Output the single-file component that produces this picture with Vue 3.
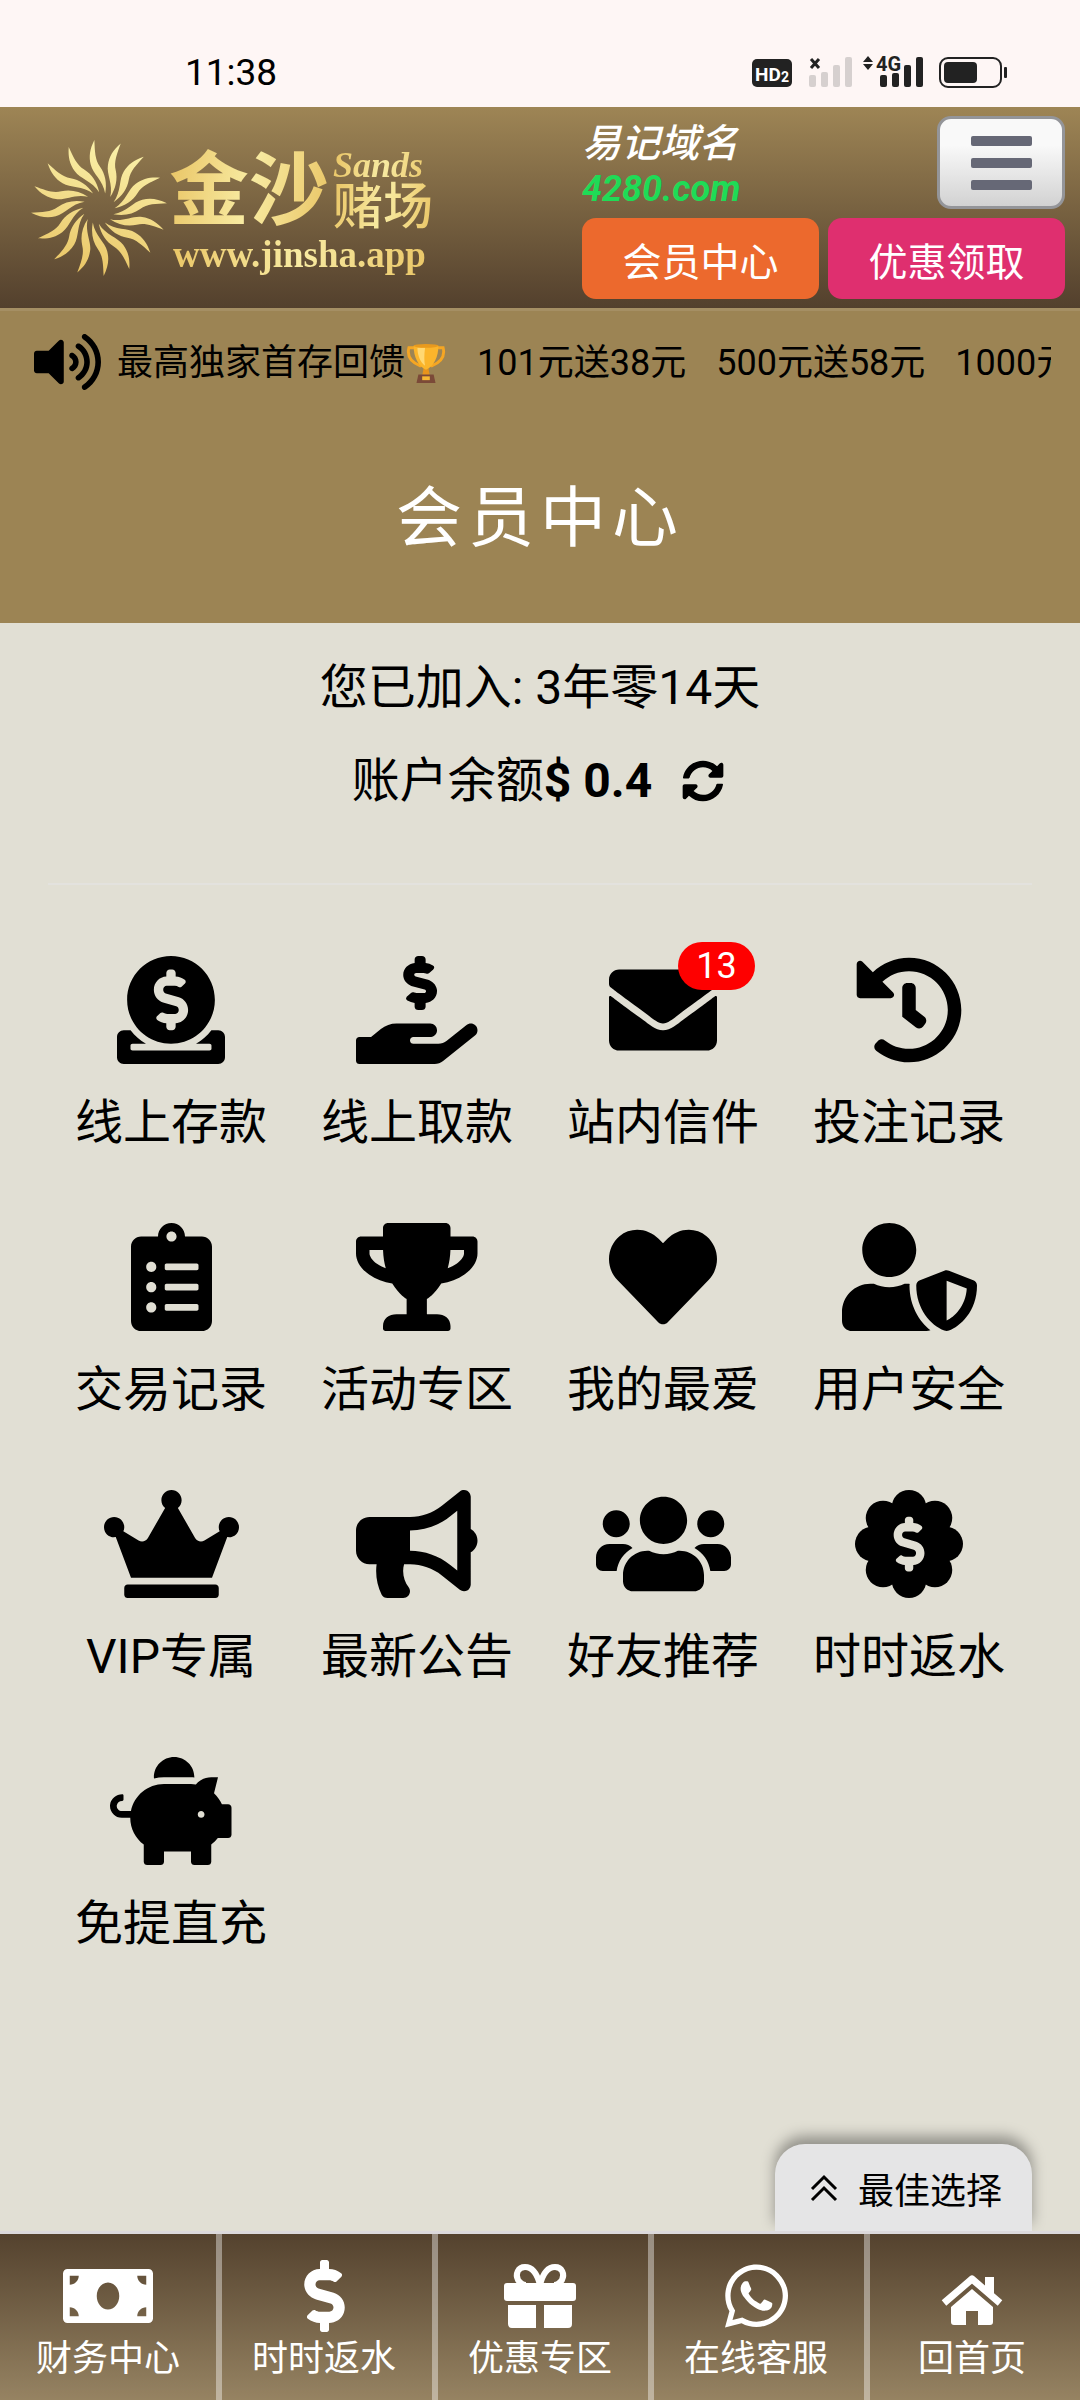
<script setup>
const dollar = 'M233.8 97.4V80.6c0-9.2 7.4-16.6 16.6-16.6h11.1c9.2 0 16.6 7.4 16.6 16.6v17c15.5.8 30.5 6.1 43 15.4 5.6 4.1 6.2 12.3 1.2 17.1L306 145.6c-3.8 3.7-9.5 3.8-14 1-5.4-3.4-11.4-5.1-17.8-5.1h-38.9c-9 0-16.3 8.2-16.3 18.3 0 8.2 5 15.5 12.1 17.6l62.3 18.7c25.7 7.7 43.7 32.4 43.7 60.1 0 34-26.4 61.5-59.1 62.4v16.8c0 9.2-7.4 16.6-16.6 16.6h-11.1c-9.2 0-16.6-7.4-16.6-16.6v-17c-15.5-.8-30.5-6.1-43-15.4-5.6-4.1-6.2-12.3-1.2-17.1l16.3-15.5c3.8-3.7 9.5-3.8 14-1 5.4 3.4 11.4 5.1 17.8 5.1h38.9c9 0 16.3-8.2 16.3-18.3 0-8.2-5-15.5-12.1-17.6l-62.3-18.7c-25.7-7.7-43.7-32.4-43.7-60.1.1-34 26.4-61.5 59.1-62.4z'

const items = [
  { label: '线上存款', w: 512, d: 'M256 416c114.9 0 208-93.1 208-208S370.9 0 256 0 48 93.1 48 208s93.1 208 208 208z' + dollar + 'M480 352h-32.5c-19.6 26-44.6 47.7-73 64h63.8c5.3 0 9.6 3.6 9.6 8v16c0 4.4-4.3 8-9.6 8H73.6c-5.3 0-9.6-3.6-9.6-8v-16c0-4.4 4.3-8 9.6-8h63.8c-28.4-16.3-53.3-38-73-64H32c-17.7 0-32 14.3-32 32v96c0 17.7 14.3 32 32 32h448c17.7 0 32-14.3 32-32v-96c0-17.7-14.3-32-32-32z' },
  { label: '线上取款', w: 576, d: 'M271.06 144.3l54.27 14.3a8.59 8.59 0 0 1 6.63 8.1c0 4.6-4.09 8.4-9.12 8.4h-35.6a30 30 0 0 1-11.19-2.2c-5.24-2.2-11.28-1.7-15.3 2l-19 17.5a11.68 11.68 0 0 0-2.25 2.66 11.42 11.42 0 0 0 3.88 15.74 83.77 83.77 0 0 0 34.51 11.5V240c0 8.8 7.83 16 17.37 16h17.37c9.55 0 17.38-7.2 17.38-16V222.4c32.93-3.6 57.84-31 53.5-63-3.15-23-22.46-41.3-46.56-47.7L282.68 97.4a8.59 8.59 0 0 1-6.63-8.1c0-4.6 4.09-8.4 9.12-8.4h35.6A30 30 0 0 1 332 83.1c5.23 2.2 11.28 1.7 15.3-2l19-17.5A11.31 11.31 0 0 0 368.47 61a11.43 11.43 0 0 0-3.84-15.78 83.82 83.82 0 0 0-34.52-11.5V16c0-8.8-7.82-16-17.37-16H295.37C285.82 0 278 7.2 278 16V33.6c-32.89 3.6-57.85 31-53.51 63C227.63 119.6 247 137.9 271.06 144.3zM565.3 328.1c-11.8-10.7-30.2-10-42.6 0L430.3 402c-11.3 9.1-25.4 14-40 14H272c-8.8 0-16-7.2-16-16s7.2-16 16-16h78.3c15.9 0 30.7-10.9 33.3-26.6 3.3-20-12.1-37.4-31.6-37.4H192c-27 0-53.1 9.3-74.1 26.3L71.4 384H16c-8.8 0-16 7.2-16 16v96c0 8.8 7.2 16 16 16h356.8c14.5 0 28.6-4.9 40-14L564 377c15.2-12.1 16.4-35.3 1.3-48.9z' },
  { label: '站内信件', w: 512, badge: 13, d: 'M502.3 190.8c3.9-3.1 9.7-.2 9.7 4.7V400c0 26.5-21.5 48-48 48H48c-26.5 0-48-21.5-48-48V195.6c0-5 5.7-7.8 9.7-4.7 22.4 17.4 52.1 39.5 154.1 113.6 21.1 15.4 56.7 47.8 92.2 47.6 35.7.3 72-32.8 92.3-47.6 102-74.1 131.6-96.3 154-113.7zM256 320c23.2.4 56.6-29.2 73.4-41.4 132.7-96.3 142.8-104.7 173.4-128.7 5.8-4.5 9.2-11.5 9.2-18.9v-19c0-26.5-21.5-48-48-48H48c-26.5 0-48 21.5-48 48v19c0 7.4 3.4 14.3 9.2 18.9 30.6 23.9 40.7 32.4 173.4 128.7 16.8 12.2 50.2 41.8 73.4 41.4z' },
  { label: '投注记录', w: 512, d: 'M504 255.531c.253 136.64-111.18 248.372-247.82 248.468-59.015.042-113.223-20.53-155.822-54.911-11.077-8.94-11.905-25.541-1.839-35.607l11.267-11.267c8.609-8.609 22.353-9.551 31.891-1.984C173.062 425.135 212.781 440 256 440c101.705 0 184-82.311 184-184 0-101.705-82.311-184-184-184-48.814 0-93.149 18.969-126.068 49.932l50.754 50.754c10.08 10.08 2.941 27.314-11.313 27.314H24c-8.837 0-16-7.163-16-16V38.627c0-14.254 17.234-21.393 27.314-11.314l49.372 49.372C129.209 34.136 189.552 8 256 8c136.81 0 247.747 110.78 248 247.531zm-180.912 78.784l9.823-12.63c8.138-10.463 6.253-25.542-4.21-33.679L288 256.349V152c0-13.255-10.745-24-24-24h-16c-13.255 0-24 10.745-24 24v135.651l65.409 50.874c10.463 8.137 25.541 6.253 33.679-4.21z' },
  { label: '交易记录', w: 384, d: 'M336 64h-80c0-35.3-28.7-64-64-64s-64 28.7-64 64H48C21.5 64 0 85.5 0 112v352c0 26.5 21.5 48 48 48h288c26.5 0 48-21.5 48-48V112c0-26.5-21.5-48-48-48zM96 424c-13.3 0-24-10.7-24-24s10.7-24 24-24 24 10.7 24 24-10.7 24-24 24zm0-96c-13.3 0-24-10.7-24-24s10.7-24 24-24 24 10.7 24 24-10.7 24-24 24zm0-96c-13.3 0-24-10.7-24-24s10.7-24 24-24 24 10.7 24 24-10.7 24-24 24zm96-192c13.3 0 24 10.7 24 24s-10.7 24-24 24-24-10.7-24-24 10.7-24 24-24zm128 368c0 4.4-3.6 8-8 8H168c-4.4 0-8-3.6-8-8v-16c0-4.4 3.6-8 8-8h144c4.4 0 8 3.6 8 8v16zm0-96c0 4.4-3.6 8-8 8H168c-4.4 0-8-3.6-8-8v-16c0-4.4 3.6-8 8-8h144c4.4 0 8 3.6 8 8v16zm0-96c0 4.4-3.6 8-8 8H168c-4.4 0-8-3.6-8-8v-16c0-4.4 3.6-8 8-8h144c4.4 0 8 3.6 8 8v16z' },
  { label: '活动专区', w: 576, d: 'M552 64H448V24c0-13.3-10.7-24-24-24H152c-13.3 0-24 10.7-24 24v40H24C10.7 64 0 74.7 0 88v56c0 35.7 22.5 72.4 61.9 100.7 31.5 22.7 69.8 37.1 110 41.7C203.3 338.5 240 360 240 360v72h-48c-35.3 0-64 20.7-64 56v12c0 6.6 5.4 12 12 12h296c6.6 0 12-5.4 12-12v-12c0-35.3-28.7-56-64-56h-48v-72s36.7-21.5 68.1-73.6c40.3-4.6 78.6-19 110-41.7 39.3-28.3 61.9-65 61.9-100.7V88c0-13.3-10.7-24-24-24zM99.3 192.8C74.9 175.2 64 155.6 64 144v-16h64.2c1 32.6 5.8 61.2 12.8 86.2-15.1-5.2-29.2-12.4-41.7-21.4zM512 144c0 16.1-17.7 36.1-35.3 48.8-12.5 9-26.7 16.2-41.8 21.4 7-25 11.8-53.6 12.8-86.2H512v16z' },
  { label: '我的最爱', w: 512, d: 'M462.3 62.6C407.5 15.9 326 24.3 275.7 76.2L256 96.5l-19.7-20.3C186.1 24.3 104.5 15.9 49.7 62.6c-62.8 53.6-66.1 149.8-9.9 207.9l193.5 199.8c12.5 12.9 32.8 12.9 45.3 0l193.5-199.8c56.3-58.1 53-154.3-9.8-207.9z' },
  { label: '用户安全', w: 640, d: 'M622.3 271.1l-115.2-45c-4.1-1.6-12.6-3.7-22.2 0l-115.2 45c-10.7 4.2-17.7 14-17.7 24.9 0 111.6 68.7 188.8 132.9 213.9 9.6 3.7 18 1.6 22.2 0C558.4 489.9 640 420.5 640 296c0-10.9-7-20.7-17.7-24.9zM496 462.4V273.3l95.5 37.3c-5.6 87.1-60.9 135.4-95.5 151.8zM224 256c70.7 0 128-57.3 128-128S294.7 0 224 0 96 57.3 96 128s57.3 128 128 128zm96 40c0-2.5.8-4.8 1.1-7.2-2.5-.1-4.9-.8-7.5-.8h-16.7c-22.2 10.2-46.9 16-72.9 16s-50.6-5.8-72.9-16h-16.7C60.2 288 0 348.2 0 422.4V464c0 26.5 21.5 48 48 48h352c6.8 0 13.3-1.5 19.2-4-54-42.9-99.2-116.7-99.2-212z' },
  { label: 'VIP专属', w: 640, d: 'M528 448H112c-8.8 0-16 7.2-16 16v32c0 8.8 7.2 16 16 16h416c8.8 0 16-7.2 16-16v-32c0-8.8-7.2-16-16-16zm64-320c-26.5 0-48 21.5-48 48 0 7.1 1.6 13.7 4.4 19.8L476 239.2c-15.4 9.2-35.3 4-44.2-11.6L350.3 85C361 76.2 368 63 368 48c0-26.5-21.5-48-48-48s-48 21.5-48 48c0 15 7 28.2 17.7 37l-81.5 142.6c-8.9 15.6-28.9 20.8-44.2 11.6l-72.3-43.4c2.7-6 4.4-12.7 4.4-19.8 0-26.5-21.5-48-48-48S0 149.5 0 176s21.5 48 48 48c2.6 0 5.2-.4 7.7-.8L128 416h384l72.3-192.8c2.5.4 5.1.8 7.7.8 26.5 0 48-21.5 48-48s-21.5-48-48-48z' },
  { label: '最新公告', w: 576, d: 'M576 240c0-23.63-12.95-44.04-32-55.12V32.01C544 23.26 537.02 0 512 0c-7.12 0-14.19 2.38-19.98 7.02l-85.03 68.03C364.28 109.19 310.66 128 256 128H64c-35.35 0-64 28.65-64 64v96c0 35.35 28.65 64 64 64h33.7c-1.39 10.48-2.18 21.14-2.18 32 0 39.77 9.26 77.35 25.56 110.94 5.19 10.69 16.52 17.06 28.4 17.06h74.28c26.05 0 41.69-29.84 25.9-50.56-16.4-21.52-26.15-48.36-26.15-77.44 0-11.11 1.62-21.79 4.41-32H256c54.66 0 108.28 18.81 150.98 52.95l85.03 68.03a32.023 32.023 0 0 0 19.98 7.02c24.92 0 32-22.78 32-32V295.13C563.05 284.04 576 263.63 576 240zm-96 141.42l-33.05-26.44C392.95 311.78 325.12 288 256 288v-96c69.12 0 136.95-23.78 190.95-66.98L480 98.58v282.84z' },
  { label: '好友推荐', w: 640, d: 'M96 224c35.3 0 64-28.7 64-64s-28.7-64-64-64-64 28.7-64 64 28.7 64 64 64zm448 0c35.3 0 64-28.7 64-64s-28.7-64-64-64-64 28.7-64 64 28.7 64 64 64zm32 32h-64c-17.6 0-33.5 7.1-45.1 18.6 40.3 22.1 68.9 62 75.1 109.4h66c17.7 0 32-14.3 32-32v-32c0-35.3-28.7-64-64-64zm-256 0c61.9 0 112-50.1 112-112S381.9 32 320 32 208 82.1 208 144s50.1 112 112 112zm76.8 32h-8.3c-20.8 10-43.9 16-68.5 16s-47.6-6-68.5-16h-8.3C179.6 288 128 339.6 128 403.2V432c0 26.5 21.5 48 48 48h288c26.5 0 48-21.5 48-48v-28.8c0-63.6-51.6-115.2-115.2-115.2zm-223.7-13.4C161.5 263.1 145.6 256 128 256H64c-35.3 0-64 28.7-64 64v32c0 17.7 14.3 32 32 32h65.9c6.3-47.4 34.9-87.3 75.2-109.4z' },
  { label: '时时返水', w: 512, flower: true },
  { label: '免提直充', w: 576, d: 'M560 224h-29.5c-8.8-20-21.6-37.7-37.4-52.5L512 96h-32c-29.4 0-55.4 13.5-73 34.3-7.6-1.1-15.1-2.3-23-2.3H256c-77.4 0-141.9 55-156.8 128H56c-14.8 0-26.5-13.5-23.5-28.8C34.7 215.8 45.4 208 57 208h1c3.3 0 6-2.7 6-6v-20c0-3.3-2.7-6-6-6-28.5 0-53.9 20.4-57.5 48.6C-3.9 258.8 22.7 288 56 288h40c0 52.2 25.4 98.1 64 127.3V496c0 8.8 7.2 16 16 16h64c8.8 0 16-7.2 16-16v-48h128v48c0 8.8 7.2 16 16 16h64c8.8 0 16-7.2 16-16v-80.7c11.8-8.9 22.3-19.4 31.3-31.3H560c8.8 0 16-7.2 16-16V240c0-8.8-7.2-16-16-16zm-128 64c-8.8 0-16-7.2-16-16s7.2-16 16-16 16 7.2 16 16-7.2 16-16 16zM256 96h128c5.4 0 10.7.4 15.9.8 0-.3.1-.5.1-.8 0-53-43-96-96-96s-96 43-96 96c0 2.1.5 4.1.6 6.2 15.2-3.9 31-6.2 47.4-6.2z' },
]
const rays = Array.from({ length: 16 }, (_, i) => i * 22.5)
const petals = Array.from({ length: 8 }, (_, i) => i * 45)
</script>

<template>
  <div class="page">
    <div class="status">
      <span class="time">11:38</span>
      <svg class="status-icons" width="256" height="34" viewBox="0 0 256 34" aria-hidden="true">
        <rect x="0" y="4" width="40" height="28" rx="5" fill="#222" />
        <text x="3" y="26" class="svg-text" font-size="19" fill="#fff">HD</text>
        <text x="29" y="27" class="svg-text" font-size="14" fill="#fff">2</text>
        <path d="M59 4l8 9M67 4l-8 9" stroke="#222" stroke-width="3" />
        <g fill="#d6d0cf">
          <rect x="57" y="20" width="7" height="12" rx="2" /><rect x="69" y="17" width="7" height="15" rx="2" />
          <rect x="81" y="10" width="7" height="22" rx="2" /><rect x="93" y="2" width="7" height="30" rx="2" />
        </g>
        <g fill="#222">
          <path d="M111 7l5-6 5 6zM111 9l5 6 5-6z" />
          <text x="124" y="16" class="svg-text" font-size="20">4G</text>
          <rect x="128" y="20" width="7" height="12" rx="2" /><rect x="140" y="18" width="7" height="14" rx="2" />
          <rect x="152" y="10" width="7" height="22" rx="2" /><rect x="164" y="2" width="7" height="30" rx="2" />
          <rect x="192" y="7" width="33" height="21" rx="4" /><rect x="252" y="12" width="3" height="11" rx="1" />
        </g>
        <rect x="188" y="3" width="61" height="29" rx="8" fill="none" stroke="#222" stroke-width="2" />
      </svg>
    </div>

    <header class="header">
      <a class="logo" href="#">
        <svg class="sun" viewBox="-67 -67 134 134" aria-hidden="true">
          <defs>
            <linearGradient id="gold" gradientUnits="userSpaceOnUse" x1="10" y1="-60" x2="-20" y2="66">
              <stop offset="0" stop-color="#faf0a8" /><stop offset="1" stop-color="#e9c464" />
            </linearGradient>
            <path id="ray" d="M-4.5-66C-9-57-10-50-8-42C-6-33 4-27 6-14C8-24 6-33 1-40C-4-47-4-55-4.500-66Z" />
          </defs>
          <mask id="sunmask" maskUnits="userSpaceOnUse" x="-67" y="-67" width="134" height="134">
            <use v-for="r in rays" :key="r" href="#ray" :transform="`rotate(${r})`" fill="#fff" />
          </mask>
          <rect x="-67" y="-67" width="134" height="134" fill="url(#gold)" mask="url(#sunmask)" />
        </svg>
        <span class="wordmark">
          <span class="brand">
            <span class="brand-main gold">金沙</span>
            <span class="brand-side">
              <span class="sands gold">Sands</span>
              <span class="casino gold">赌场</span>
            </span>
          </span>
          <span class="url gold">www.jinsha.app</span>
        </span>
      </a>
      <div class="tools">
        <div class="tools-top">
          <div class="domain"><span>易记域名</span><b>4280.com</b></div>
          <button class="menu" type="button" aria-label="菜单"><i></i><i></i><i></i></button>
        </div>
        <div class="tools-buttons">
          <button class="pill orange" type="button">会员中心</button>
          <button class="pill pink" type="button">优惠领取</button>
        </div>
      </div>
    </header>

    <section class="banner">
      <div class="news">
        <svg class="speaker" viewBox="0 0 576 512" aria-hidden="true"><path d="M215.03 71.05L126.06 160H24c-13.26 0-24 10.74-24 24v144c0 13.25 10.74 24 24 24h102.06l88.97 88.95c15.03 15.03 40.97 4.47 40.97-16.97V88.02c0-21.46-25.96-31.98-40.97-16.97zm233.32-51.08c-11.17-7.33-26.18-4.24-33.51 6.95-7.34 11.17-4.22 26.18 6.95 33.51 66.27 43.49 105.82 116.6 105.82 195.58 0 78.98-39.55 152.09-105.82 195.58-11.17 7.32-14.29 22.34-6.95 33.5 7.04 10.71 21.93 14.56 33.51 6.95C528.27 439.58 576 351.33 576 256S528.27 72.43 448.35 19.97zM480 256c0-63.53-32.06-121.94-85.77-156.24-11.19-7.14-26.03-3.82-33.12 7.46s-3.78 26.21 7.41 33.36C408.27 165.97 432 209.11 432 256s-23.73 90.02-63.48 115.42c-11.19 7.14-14.5 22.07-7.41 33.36 6.51 10.36 21.12 15.14 33.12 7.46C447.94 377.94 480 319.53 480 256zm-141.77-76.87c-11.58-6.33-26.19-2.16-32.61 9.45-6.39 11.61-2.16 26.2 9.45 32.61C327.98 228.28 336 241.63 336 256c0 14.38-8.02 27.72-20.92 34.81-11.61 6.41-15.84 21-9.45 32.61 6.43 11.66 21.05 15.8 32.61 9.45 28.23-15.55 45.77-45 45.77-76.88s-17.54-61.32-45.78-76.86z" /></svg>
        <div class="ticker">
          <span class="ticker-item">最高独家首存回馈<svg class="cup" viewBox="0 0 42 42" aria-hidden="true">
            <path d="M8 5H3c-2 8 2 15 12 19M34 5h5c2 8-2 15-12 19" fill="none" stroke="#f5a623" stroke-width="3" stroke-linecap="round" />
            <path d="M19 24h4l2 10h-8z" fill="#e8941c" />
            <path d="M8 3h26c0 12-5 22-13 25C13 25 8 15 8 3z" fill="#fbb52b" />
            <path d="M12 5h8c-1 8-1 14 0 19-5-4-8-11-8-19z" fill="#ffd873" />
            <ellipse cx="21" cy="3" rx="13" ry="2" fill="#e89a1e" />
            <path d="M13 33h16l2 9H11z" fill="#7b4a38" /><rect x="17" y="35" width="8" height="4" fill="#f7b733" />
          </svg></span>
          <span class="ticker-item">101元送38元</span>
          <span class="ticker-item">500元送58元</span>
          <span class="ticker-item">1000元送88元</span>
        </div>
      </div>
      <h1>会员中心</h1>
    </section>

    <main>
      <div class="account">
        <p>您已加入: 3年零14天</p>
        <p>账户余额<b>$ 0.4</b>
          <button class="refresh" type="button" aria-label="刷新余额">
            <svg viewBox="0 0 512 512" aria-hidden="true"><path d="M370.72 133.28C339.458 104.008 298.888 87.962 255.848 88c-77.458.068-144.328 53.178-162.791 126.85-1.344 5.363-6.122 9.15-11.651 9.15H24.103c-7.498 0-13.194-6.807-11.807-14.176C33.933 94.924 134.813 8 256 8c66.448 0 126.791 26.136 171.315 68.685L463.03 40.97C478.149 25.851 504 36.559 504 57.941V192c0 13.255-10.745 24-24 24H345.941c-21.382 0-32.09-25.851-16.971-40.971l41.75-41.749zM32 296h134.059c21.382 0 32.09 25.851 16.971 40.971l-41.75 41.75c31.262 29.273 71.835 45.319 114.876 45.28 77.418-.07 144.315-53.144 162.787-126.849 1.344-5.363 6.122-9.15 11.651-9.15h57.304c7.498 0 13.194 6.807 11.807 14.176C478.067 417.076 377.187 504 256 504c-66.448 0-126.791-26.136-171.315-68.685L48.97 471.03C33.851 486.149 8 475.441 8 454.059V320c0-13.255 10.745-24 24-24z" /></svg>
          </button>
        </p>
      </div>
      <div class="grid">
        <a v-for="item in items" :key="item.label" class="cell" href="#">
          <span class="icon">
            <svg height="108" :viewBox="`0 0 ${item.w} 512`" aria-hidden="true">
              <template v-if="item.flower">
                <circle cx="256" cy="256" r="180" />
                <circle v-for="p in petals" :key="p" cx="256" cy="82" r="82" :transform="`rotate(${p} 256 256)`" />
                <path :d="dollar" fill="#e1dfd4" transform="translate(26 69) scale(.9)" />
              </template>
              <path v-else :d="item.d" fill-rule="evenodd" />
            </svg>
            <span v-if="item.badge" class="badge">{{ item.badge }}</span>
          </span>
          <span class="label">{{ item.label }}</span>
        </a>
      </div>
    </main>

    <div class="best-row">
      <button class="best" type="button">
        <svg width="28" height="28" viewBox="0 0 28 28" fill="none" stroke="#000" stroke-width="3" aria-hidden="true"><path d="M2 15L14 3l12 12M2 26l12-12 12 12" /></svg>
        最佳选择
      </button>
    </div>

    <nav class="nav">
      <a href="#"><span class="nav-icon"><svg width="90" height="72" viewBox="0 0 640 512"><path d="M608 64H32C14.33 64 0 78.33 0 96v320c0 17.67 14.33 32 32 32h576c17.67 0 32-14.33 32-32V96c0-17.67-14.33-32-32-32zM48 400v-64c35.35 0 64 28.65 64 64H48zm0-224v-64h64c0 35.35-28.65 64-64 64zm272 176c-44.19 0-80-42.98-80-96 0-53.03 35.82-96 80-96s80 42.98 80 96c0 53.04-35.82 96-80 96zm272 48h-64c0-35.35 28.65-64 64-64v64zm0-224c-35.35 0-64-28.65-64-64h64v64z" /></svg></span>财务中心</a>
      <a href="#"><span class="nav-icon"><svg width="41" height="72" viewBox="0 0 288 512"><path d="M209.2 233.4l-108-31.6C88.7 198.2 80 186.5 80 173.5c0-16.3 13.2-29.5 29.5-29.5h66.3c12.2 0 24.2 3.7 34.2 10.5 6.1 4.1 14.3 3.1 19.5-2l34.8-34c7.1-6.9 6.1-18.4-1.8-24.5C238 74.8 207.4 64.1 176 64V16c0-8.8-7.2-16-16-16h-32c-8.8 0-16 7.2-16 16v48h-2.5C45.8 64-5.4 118.7.5 183.6c4.2 46.1 39.4 83.6 83.8 96.6l102.5 30c12.5 3.7 21.2 15.3 21.2 28.3 0 16.3-13.2 29.5-29.5 29.5h-66.3C100 368 88 364.3 78 357.5c-6.1-4.1-14.3-3.1-19.5 2l-34.8 34c-7.1 6.9-6.1 18.4 1.8 24.5 24.5 19.2 55.1 29.9 86.5 30v48c0 8.8 7.2 16 16 16h32c8.8 0 16-7.2 16-16v-48.2c46.6-.9 90.3-28.6 105.7-72.7 21.5-61.6-14.6-124.8-72.5-141.7z" /></svg></span>时时返水</a>
      <a href="#"><span class="nav-icon"><svg width="72" height="72" viewBox="0 0 72 72">
        <path d="M36 25C33 13 28 7 21 7c-7 0-10 7-7 13 2 3 5 5 8 5M36 25C39 13 44 7 51 7c7 0 10 7 7 13-2 3-5 5-8 5" fill="none" stroke="#fff" stroke-width="6" />
        <rect x="0" y="23" width="72" height="18" rx="3" /><path d="M4 45h28v23H8a4 4 0 0 1-4-4zM40 45h28v19a4 4 0 0 1-4 4H40z" />
      </svg></span>优惠专区</a>
      <a href="#"><span class="nav-icon"><svg width="63" height="72" viewBox="0 0 448 512"><path d="M380.9 97.1C339 55.1 283.2 32 223.9 32c-122.4 0-222 99.6-222 222 0 39.1 10.2 77.3 29.6 111L0 480l117.7-30.9c32.4 17.7 68.9 27 106.1 27h.1c122.3 0 224.1-99.6 224.1-222 0-59.3-25.2-115-67.1-157zm-157 341.6c-33.2 0-65.7-8.9-94-25.7l-6.7-4-69.8 18.3L72 359.2l-4.4-7c-18.5-29.4-28.2-63.3-28.2-98.2 0-101.7 82.8-184.5 184.6-184.5 49.3 0 95.6 19.2 130.4 54.1 34.8 34.9 56.2 81.2 56.1 130.5 0 101.8-84.9 184.6-186.6 184.6zm101.2-138.2c-5.5-2.8-32.8-16.2-37.9-18-5.1-1.9-8.8-2.8-12.5 2.8-3.7 5.6-14.3 18-17.6 21.8-3.2 3.7-6.5 4.2-12 1.4-32.6-16.3-54-29.1-75.5-66-5.7-9.8 5.7-9.1 16.3-30.3 1.8-3.7.9-6.9-.5-9.7-1.4-2.8-12.5-30.1-17.1-41.2-4.5-10.8-9.1-9.3-12.5-9.5-3.2-.2-6.9-.2-10.6-.2-3.7 0-9.7 1.4-14.8 6.9-5.1 5.6-19.4 19-19.4 46.3 0 27.3 19.9 53.7 22.6 57.4 2.8 3.7 39.1 59.7 94.8 83.8 35.2 15.2 49 16.5 66.6 13.9 10.7-1.6 32.8-13.4 37.4-26.4 4.6-13 4.6-24.1 3.2-26.4-1.3-2.5-5-3.9-10.5-6.6z" /></svg></span>在线客服</a>
      <a href="#"><span class="nav-icon"><svg width="62" height="72" viewBox="0 0 62 72">
        <path d="M3 43L31 19l28 24" fill="none" stroke="#fff" stroke-width="7" stroke-linejoin="round" /><path d="M44 17h9v19l-9-8z" />
        <path d="M31 29l21 18v15a3 3 0 0 1-3 3H37V51H25v14H13a3 3 0 0 1-3-3V47z" />
      </svg></span>回首页</a>
    </nav>
  </div>
</template>

<style>
body { background: #e1dfd4; }
</style>

<style scoped>
.page {
  min-height: 100vh;
  display: flex;
  flex-direction: column;
  background: #e1dfd4;
  color: #000;
  font-family: Roboto, "Noto Sans CJK SC", sans-serif;
}
button { font-family: inherit; border: 0; padding: 0; margin: 0; color: inherit; background: none; cursor: pointer; }
a { color: inherit; text-decoration: none; }
svg { display: block; }
p, h1 { margin: 0; }

.status {
  display: flex;
  justify-content: space-between;
  align-items: flex-end;
  height: 107px;
  box-sizing: border-box;
  padding: 0 72px 16px 185px;
  background: #fef6f5;
}
.time { font-size: 37px; line-height: 36px; }
.status-icons { margin-bottom: 2px; }
.svg-text { font-weight: 700; }

.header {
  display: flex;
  justify-content: space-between;
  padding: 9px 15px 9px 30px;
  background: linear-gradient(#9e8555, #53402d);
}
.logo { display: flex; align-items: center; gap: 1px; }
.sun { width: 138px; height: 138px; }
.wordmark { display: flex; flex-direction: column; padding-top: 10px; }
.gold {
  background: linear-gradient(100deg, #e9c464, #f8eba2 50%, #e9c464);
  -webkit-background-clip: text;
  background-clip: text;
  color: transparent;
}
.brand { display: flex; gap: 4px; }
.brand-main { font-size: 80px; line-height: 84px; font-weight: 700; }
.brand-side { display: flex; flex-direction: column; }
.sands { font: italic bold 36px/32px "Liberation Serif", serif; }
.casino { font-size: 50px; line-height: 52px; font-weight: 500; }
.url { font: bold 37px/44px "Liberation Serif", serif; padding-left: 4px; }

.tools { display: flex; flex-direction: column; justify-content: space-between; gap: 9px; width: 483px; }
.tools-top { display: flex; justify-content: space-between; }
.domain { display: flex; flex-direction: column; padding-top: 2px; font-style: italic; color: #fff; font-size: 39px; font-weight: 500; line-height: 52px; }
.domain b { color: #1fdb56; font-size: 36px; line-height: 38px; font-weight: 700; }
.menu {
  display: flex;
  flex-direction: column;
  align-items: center;
  justify-content: center;
  gap: 12px;
  width: 128px;
  height: 93px;
  border: 3px solid #949599;
  border-radius: 14px;
  background: linear-gradient(#f9f9f9 30%, #d2d2d2);
}
.menu i { width: 61px; height: 10px; border-radius: 2px; background: #666876; }
.tools-buttons { display: flex; gap: 9px; }
.pill { flex: 1; height: 81px; border-radius: 14px; color: #fff; font-size: 39px; }
.orange { background: #ec692d; }
.pink { background: #df2f6f; }

.banner { border-top: 3px solid #a58f64; background: #9c8454; padding-bottom: 56px; }
.news { display: flex; align-items: center; gap: 16px; padding: 20px 29px 20px 34px; }
.speaker { flex: none; width: 67px; height: 60px; }
.ticker { flex: 1; min-width: 0; display: flex; gap: 30px; overflow: hidden; padding-top: 2px; font-size: 36px; line-height: 60px; white-space: nowrap; }
.ticker-item { display: flex; align-items: center; flex: none; }
.cup { width: 42px; height: 40px; }
h1 { padding-top: 58px; font-size: 66px; line-height: 96px; font-weight: 400; letter-spacing: 6px; text-align: center; color: #fff; }

main { flex: 1; padding: 0 48px; }
.account { padding: 18px 0 56px; border-bottom: 2px solid #e3e2de; font-size: 48px; line-height: 93px; }
.account p { display: flex; justify-content: center; align-items: center; white-space: pre; }
.refresh { margin: 0 4px 0 30px; }
.refresh svg { width: 42px; height: 42px; }
.grid { display: grid; grid-template-columns: repeat(4, 1fr); row-gap: 70px; padding: 71px 0; }
.cell { display: flex; flex-direction: column; align-items: center; gap: 29px; }
.icon { position: relative; }
.badge {
  position: absolute;
  left: 69px;
  top: -14px;
  width: 77px;
  border-radius: 24px;
  background: #fe0000;
  color: #fff;
  font-size: 36px;
  line-height: 48px;
  text-align: center;
}
.label { font-size: 48px; line-height: 60px; white-space: nowrap; }

.best-row { display: flex; justify-content: flex-end; padding-right: 48px; border-bottom: 3px solid #dcd9dc; }
.best {
  display: flex;
  align-items: center;
  justify-content: center;
  gap: 20px;
  width: 257px;
  height: 87px;
  padding-left: 5px;
  border-radius: 30px 30px 0 0;
  background: #e5e5e6;
  box-shadow: 0 -8px 14px rgba(0, 0, 0, .35);
  clip-path: inset(-30px -30px 0 -30px);
  font-size: 36px;
}

.nav { display: grid; grid-template-columns: repeat(5, 1fr); background: linear-gradient(#54422e, #968362); color: #fff; }
.nav a { display: flex; flex-direction: column; align-items: center; gap: 2px; padding: 26px 0 16px; font-size: 36px; line-height: 50px; }
.nav a + a { box-shadow: inset 6px 0 rgba(255, 255, 255, .4); }
.nav-icon { display: flex; align-items: center; height: 72px; }
.nav svg { fill: #fff; }
</style>
